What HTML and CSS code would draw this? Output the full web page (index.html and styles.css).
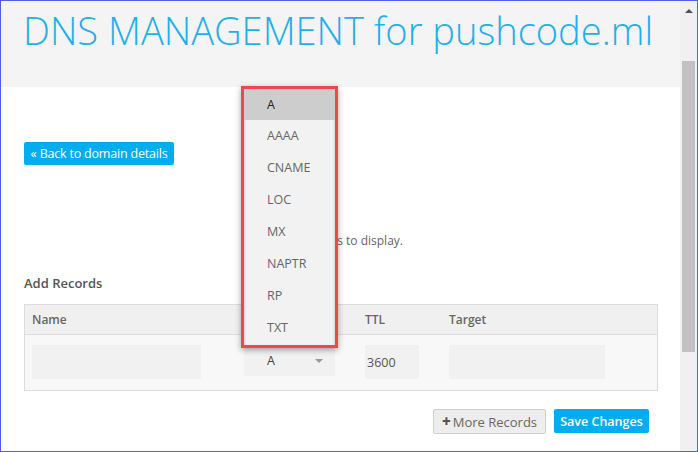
FILE: index.html
```html
<!DOCTYPE html>
<html>
<head>
<meta charset="utf-8">
<link rel="stylesheet" href="styles.css">
</head>
<body>
<div class="frame">
  <div class="page">
    <header class="hero">
      <h1 class="title">DNS MANAGEMENT for pushcode.ml</h1>
    </header>
    <main class="content">
      <div class="back-row"><a class="btn btn-primary back">« Back to domain details</a></div>
      <p class="empty">No records to display.</p>
      <h2 class="section">Add Records</h2>
      <div class="table">
        <div class="row head">
          <div class="cell">Name</div>
          <div class="cell">Type</div>
          <div class="cell">TTL</div>
          <div class="cell">Target</div>
        </div>
        <div class="row body">
          <div class="cell"><div class="input name-in"></div></div>
          <div class="cell"><div class="input select"><span>A</span><span class="caret"></span></div></div>
          <div class="cell"><div class="input ttl-in">3600</div></div>
          <div class="cell"><div class="input target-in"></div></div>
        </div>
      </div>
      <div class="actions">
        <a class="btn btn-default"><span class="plus">+</span>More Records</a>
        <a class="btn btn-primary save">Save Changes</a>
      </div>
    </main>
    <div class="dropdown">
      <ul class="options">
        <li class="opt active">A</li>
        <li class="opt">AAAA</li>
        <li class="opt">CNAME</li>
        <li class="opt">LOC</li>
        <li class="opt">MX</li>
        <li class="opt">NAPTR</li>
        <li class="opt">RP</li>
        <li class="opt">TXT</li>
      </ul>
    </div>
  </div>
  <div class="scrollbar">
    <div class="arrow"></div>
    <div class="thumb"></div>
  </div>
</div>
</body>
</html>
```

FILE: styles.css
```css
* { box-sizing: border-box; }
html, body { margin: 0; padding: 0; background: #fff; }
body { font-family: "Open Sans", "Noto Sans", sans-serif; }

.frame {
  width: 698px;
  height: 452px;
  border: 1px solid #4d5ff0;
  display: flex;
  overflow: hidden;
}

.page {
  position: relative;
  width: 679px;
  height: 100%;
  background: #fff;
}

.hero {
  height: 86px;
  background: #f4f4f4;
  padding: 0 0 0 22px;
}
.title {
  margin: 0;
  padding-top: 3px;
  font-weight: 300;
  font-size: 38.1px;
  line-height: 52px;
  color: #1eb0ea;
  white-space: nowrap;
}

.content {
  padding: 0 22px 0 23px;
}

.back-row { padding-top: 54px; height: 77px; }
.btn {
  display: inline-flex;
  align-items: center;
  justify-content: center;
  font-size: 12.5px;
  height: 23px;
  border-radius: 2px;
  white-space: nowrap;
}
.btn-primary { background: #00adee; color: #fff; }
.back { width: 150px; letter-spacing: -0.2px; }

.empty {
  margin: 0;
  padding-top: 68px;
  padding-left: 257px;
  font-size: 12px;
  color: #666;
  line-height: 17px;
}
.section {
  margin: 26px 0 0;
  font-size: 13px;
  font-weight: 600;
  color: #555;
  height: 29px;
  line-height: 17px;
}

.table {
  width: 634px;
  border: 1px solid #dcdcdc;
}
.row {
  display: grid;
  grid-template-columns: 212px 121px 84px 1fr;
}
.head {
  height: 30px;
  background: #f0f0f0;
  border-bottom: 1px solid #dcdcdc;
  align-items: center;
  font-size: 12px;
  font-weight: 600;
  color: #666;
}
.head .cell { padding-left: 7px; }
.body {
  height: 55px;
  background: #f8f8f8;
  padding-top: 10px;
}
.body .cell { padding-left: 7px; }
.input {
  background: #f1f1f1;
  height: 34px;
  font-size: 12.5px;
  color: #555;
  display: flex;
  align-items: center;
  padding-left: 2px;
}
.name-in { width: 169px; }
.ttl-in { width: 54px; }
.target-in { width: 156px; }
.select {
  width: 91px;
  height: 31px;
  padding: 0 12px 0 23px;
  justify-content: space-between;
  color: #444;
}
.caret {
  width: 0; height: 0;
  border-left: 4px solid transparent;
  border-right: 4px solid transparent;
  border-top: 4px solid #999;
}

.actions {
  display: flex;
  justify-content: flex-end;
  gap: 8px;
  width: 625px;
  margin-top: 18px;
}
.btn-default {
  width: 113px;
  height: 25px;
  background: #ededed;
  border: 1px solid #cfcfcf;
  color: #666;
  font-size: 13px;
}
.plus { font-weight: 800; font-size: 15px; color: #555; margin-right: 2px; line-height: 1; }
.save { width: 95px; font-weight: 600; height: 24px; }

.dropdown {
  position: absolute;
  left: 240px;
  top: 85px;
  width: 97px;
  height: 262px;
  border: 3px solid #f0474a;
  box-shadow: 0 2px 6px rgba(0,0,0,0.35);
  background: #f2f2f2;
}
.options {
  list-style: none;
  margin: 0;
  padding: 0;
  box-shadow: inset 0 2px 3px rgba(0,0,0,0.25);
  height: 100%;
}
.opt {
  height: 32px;
  line-height: 32px;
  padding-left: 23px;
  font-size: 12.5px;
  color: #666;
}
.opt.active { background: #cdcdcd; color: #222; height: 31px; line-height: 31px; }

.scrollbar {
  position: relative;
  width: 17px;
  height: 100%;
  background: #f0f0f0;
  padding: 8px 2px 0 2px;
}
.arrow {
  margin: 0 auto;
  width: 0; height: 0;
  border-left: 4px solid transparent;
  border-right: 4px solid transparent;
  border-bottom: 4px solid #505050;
}
.thumb {
  margin-top: 48px;
  height: 291px;
  background: #c1c1c1;
}
```
